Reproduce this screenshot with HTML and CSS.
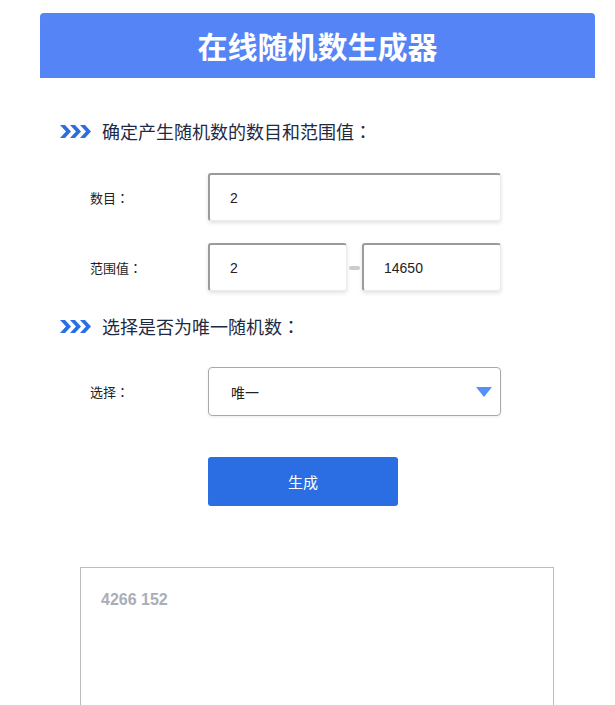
FILE: index.html
```html
<!DOCTYPE html>
<html lang="zh-CN">
<head>
<meta charset="utf-8">
<title>在线随机数生成器</title>
<link rel="stylesheet" href="styles.css">
</head>
<body>
<div class="page">
  <header class="header">在线随机数生成器</header>

  <h2 class="section-title">
    <svg class="chevrons" width="32" height="13" viewBox="0 0 32 13" aria-hidden="true">
      <path d="M0 0h5l6 6.5-6 6.5H0l6-6.5z M10 0h5l6 6.5-6 6.5h-5l6-6.5z M20 0h5l6 6.5-6 6.5h-5l6-6.5z" fill="#2b6de3"/>
    </svg>
    <span>确定产生随机数的数目和范围值<span class="colon" lang="zh-TW">：</span></span>
  </h2>

  <div class="form-grid first-grid">
    <label class="label">数目<span class="colon" lang="zh-TW">：</span></label>
    <input class="field" type="text" value="2">
    <label class="label">范围值<span class="colon" lang="zh-TW">：</span></label>
    <div class="range">
      <input class="field small" type="text" value="2">
      <span class="dash"></span>
      <input class="field small" type="text" value="14650">
    </div>
  </div>

  <h2 class="section-title second">
    <svg class="chevrons" width="32" height="13" viewBox="0 0 32 13" aria-hidden="true">
      <path d="M0 0h5l6 6.5-6 6.5H0l6-6.5z M10 0h5l6 6.5-6 6.5h-5l6-6.5z M20 0h5l6 6.5-6 6.5h-5l6-6.5z" fill="#2b6de3"/>
    </svg>
    <span>选择是否为唯一随机数<span class="colon" lang="zh-TW">：</span></span>
  </h2>

  <div class="form-grid select-grid">
    <label class="label">选择<span class="colon" lang="zh-TW">：</span></label>
    <div class="select">
      <span>唯一</span>
      <span class="arrow"></span>
    </div>
  </div>

  <div class="actions">
    <button class="btn" type="button">生成</button>
  </div>

  <div class="result">4266 152</div>
</div>
</body>
</html>
```

FILE: styles.css
```css
* { box-sizing: border-box; }

body {
  margin: 0;
  background: #fff;
  font-family: "Liberation Sans", "Noto Sans CJK SC", sans-serif;
  color: #222;
}

.page {
  width: 555px;
  margin-left: 40px;
  padding-top: 13px;
}

.header {
  height: 65px;
  line-height: 65px;
  background: #5584f6;
  border-radius: 4px 4px 0 0;
  color: #fff;
  text-align: center;
  font-family: "Noto Sans CJK SC", sans-serif;
  font-weight: 700;
  font-size: 30px;
}

.colon {
  font-family: "Noto Sans CJK TC", "Noto Sans CJK SC", sans-serif;
}

.section-title {
  margin: 40px 0 0 20px;
  height: 26px;
  display: flex;
  align-items: center;
  gap: 10px;
  font-family: "Noto Sans CJK SC", sans-serif;
  font-weight: 400;
  font-size: 18px;
  color: #1e2a44;
}

.section-title.second {
  margin-top: 22px;
}

.chevrons { flex: none; }

.form-grid {
  display: grid;
  grid-template-columns: 118px 293px;
  row-gap: 22px;
  align-items: center;
  padding-left: 50px;
}

.first-grid { margin-top: 29px; }
.select-grid { margin-top: 28px; }

.label {
  font-family: "Noto Sans CJK SC", sans-serif;
  font-size: 13px;
  color: #222;
}

.field {
  width: 293px;
  height: 48px;
  margin: 0;
  padding: 0 0 0 20px;
  border-style: solid;
  border-width: 2px 1px 1px 2px;
  border-color: #9b9b9b #ececec #ececec #9b9b9b;
  border-radius: 3px;
  box-shadow: 0 2px 4px rgba(0, 0, 0, 0.12);
  font-family: "Liberation Sans", sans-serif;
  font-size: 14px;
  color: #222;
  background: #fff;
  outline: none;
}

.field.small { width: 139px; }

.range {
  display: flex;
  align-items: center;
  justify-content: space-between;
  width: 293px;
}

.dash {
  width: 11px;
  height: 4px;
  margin-top: 2px;
  border-radius: 2px;
  background: #cccccc;
}

.select {
  position: relative;
  width: 293px;
  height: 49px;
  display: flex;
  align-items: center;
  padding-left: 22px;
  border: 1px solid #a9a9a9;
  border-radius: 4px;
  box-shadow: 0 1px 3px rgba(0, 0, 0, 0.08);
  font-family: "Noto Sans CJK SC", sans-serif;
  font-size: 14px;
  color: #222;
}

.arrow {
  position: absolute;
  right: 8px;
  top: 19px;
  width: 0;
  height: 0;
  border-left: 8px solid transparent;
  border-right: 8px solid transparent;
  border-top: 10px solid #5590f6;
}

.actions {
  margin-top: 41px;
  padding-left: 168px;
}

.btn {
  width: 190px;
  height: 49px;
  border: none;
  border-radius: 3px;
  background: #2b6de3;
  color: #fff;
  font-family: "Noto Sans CJK SC", sans-serif;
  font-size: 15px;
  cursor: pointer;
}

.result {
  margin: 61px 0 0 40px;
  width: 474px;
  height: 200px;
  border: 1px solid #bcbcbc;
  padding: 23px 20px;
  font-family: "Liberation Sans", sans-serif;
  font-weight: 700;
  font-size: 16px;
  color: #a9adb8;
}
```
